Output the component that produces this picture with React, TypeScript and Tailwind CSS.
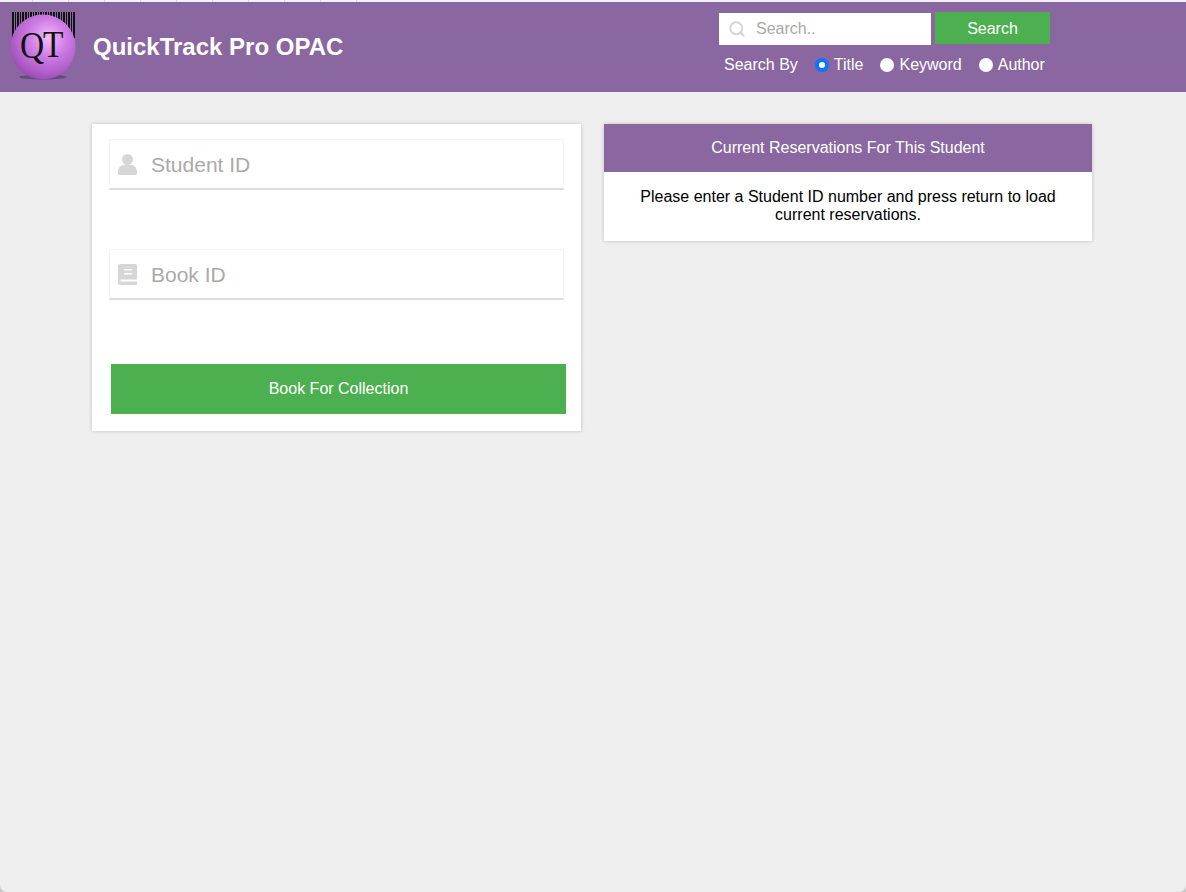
import React from "react";
import { Search } from "lucide-react";

const barcode = [
  [0, 2], [3, 1], [5, 2], [8, 1], [10, 2], [13, 2], [16, 1], [18, 2], [21, 1], [23, 2], [26, 1], [28, 2],
  [31, 1], [33, 2], [36, 1], [38, 2], [41, 2], [44, 1], [46, 2], [49, 1], [51, 2], [54, 1], [56, 2], [59, 1], [61, 2],
];

const Logo = () => (
  <svg width="70" height="70" viewBox="0 0 70 70" className="shrink-0">
    <defs>
      <radialGradient id="ball" cx="58%" cy="36%" r="68%">
        <stop offset="0%" stopColor="#f2bcfd" />
        <stop offset="42%" stopColor="#d07ee6" />
        <stop offset="85%" stopColor="#aa58c4" />
        <stop offset="100%" stopColor="#9549ae" />
      </radialGradient>
    </defs>
    {barcode.map(([x, w], i) => (
      <rect key={i} x={x + 2} y="2" width={w} height="26" fill="#111" />
    ))}
    <ellipse cx="33" cy="67" rx="24" ry="2.5" fill="#55406a" opacity="0.7" />
    <circle cx="33" cy="37" r="32.5" fill="url(#ball)" />
    <text transform="translate(10,47.5) scale(0.88,1)" fontFamily="Liberation Serif, serif" fontSize="38" fill="#111">Q</text>
    <text transform="translate(33,46.5) scale(0.88,1)" fontFamily="Liberation Serif, serif" fontSize="38" fill="#111">T</text>
  </svg>
);

const UserIcon = () => (
  <svg width="19" height="21" viewBox="0 0 19 21" fill="currentColor">
    <circle cx="9.5" cy="5.5" r="5.5" />
    <path d="M0 18c0-4.5 3-7 6-7h7c3 0 6 2.500 6 7v1.500a1.500 1.500 0 0 1-1.500 1.500h-16a1.500 1.500 0 0 1-1.500-1.500z" />
  </svg>
);

const BookIcon = () => (
  <svg width="19" height="21" viewBox="0 0 19 21" fill="currentColor">
    <path d="M2.500 0h15a1.500 1.500 0 0 1 1.500 1.500v19.500h-16.500a2.500 2.500 0 0 1-2.500-2.500v-16a2.500 2.500 0 0 1 2.500-2.500z" />
    <rect x="6" y="5" width="8" height="1.500" fill="#fff" />
    <rect x="6" y="9" width="8" height="1.500" fill="#fff" />
    <rect x="2.500" y="15.500" width="16.500" height="2" fill="#fff" />
  </svg>
);

const radios = ["Title", "Keyword", "Author"];

const Field = ({ placeholder, icon }: { placeholder: string; icon: React.ReactNode }) => (
  <div className="flex items-center h-[51px] w-[455px] border border-[#f4f4f4] border-b-2 border-b-[#dddddd] bg-white">
    <div className="w-[41px] pl-[8px] flex items-center justify-start text-[#d6d6d6]">{icon}</div>
    <input
      placeholder={placeholder}
      className="flex-1 pt-[2px] outline-none text-[21px] placeholder:text-[#aaaaaa] bg-transparent"
    />
  </div>
);

const App = () => {
  return (
    <div className="h-[892px] bg-[#c9c9c9] font-['Liberation_Sans',Arial,sans-serif] overflow-hidden">
      <div className="h-full bg-[#efefef] rounded-b-[7px] overflow-hidden">
        <div className="h-[2px] bg-[#f4f1f6] flex">
          <div className="w-[33px] border-r border-[#d8d0de]" />
          {Array.from({ length: 9 }).map((_, i) => (
            <div key={i} className="w-[36px] border-r border-[#d8d0de]" />
          ))}
        </div>

        <header className="h-[90px] bg-[#8a67a0] flex items-start">
          <div className="pl-[10px] pt-[8px]">
            <Logo />
          </div>
          <h1 className="ml-[13px] mt-[29px] text-white font-bold text-[24px] leading-[32px]">QuickTrack Pro OPAC</h1>

          <div className="ml-auto mr-[136px] w-[331px] pt-[10px]">
            <div className="flex items-start gap-[4px]">
              <div className="mt-[1px] w-[212px] h-[32px] bg-white flex items-center">
                <Search className="ml-[9px] w-[18px] h-[18px] text-[#d4d4d4]" strokeWidth={2.5} />
                <input
                  placeholder="Search.."
                  className="ml-[10px] w-[160px] outline-none text-[16px] placeholder:text-[#a9a9a9]"
                />
              </div>
              <button className="w-[115px] h-[32px] pt-[2px] bg-[#4caf50] text-white text-[16px]">Search</button>
            </div>
            <div className="mt-[11px] ml-[5px] flex items-center text-white text-[16px] leading-[18px] whitespace-nowrap">
              <span className="mr-[17px]">Search By</span>
              {radios.map((label, i) => (
                <label key={label} className="flex items-center mr-[17px]">
                  <input
                    type="radio"
                    name="by"
                    defaultChecked={i === 0}
                    className="appearance-none w-[14px] h-[14px] rounded-full bg-white checked:border-[4px] checked:border-[#0b76f7] mr-[5px]"
                  />
                  {label}
                </label>
              ))}
            </div>
          </div>
        </header>

        <main className="grid grid-cols-[489px_488px] gap-[23px] pl-[92px] pt-[32px] items-start">
          <section className="h-[307px] bg-white shadow-[0_0_4px_rgba(0,0,0,0.2)] pl-[17px] pt-[15px]">
            <Field placeholder="Student ID" icon={<UserIcon />} />
            <div className="mt-[59px]">
              <Field placeholder="Book ID" icon={<BookIcon />} />
            </div>
            <button className="block mt-[64px] ml-[2px] w-[455px] h-[50px] bg-[#4caf50] text-white text-[16px]">
              Book For Collection
            </button>
          </section>

          <section className="bg-white shadow-[0_0_4px_rgba(0,0,0,0.2)]">
            <div className="h-[48px] bg-[#8a67a0] text-white text-[16px] flex items-center justify-center">
              Current Reservations For This Student
            </div>
            <p className="h-[69px] px-[30px] pt-[16px] text-center text-[16px] leading-[18px] text-black">
              Please enter a Student ID number and press return to load current reservations.
            </p>
          </section>
        </main>
      </div>
    </div>
  );
};

export default App;
